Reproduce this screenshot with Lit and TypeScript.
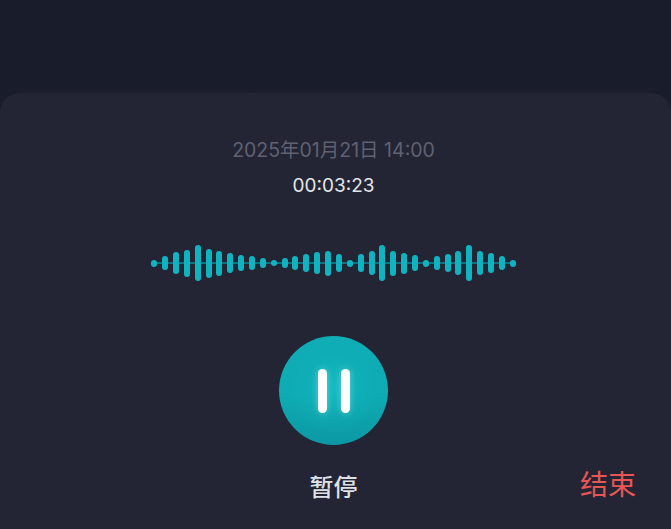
import { LitElement, html, css } from "lit";
import { customElement } from "lit/decorators.js";

const BARS = [7,14,22,27,36,29,25,20,16,14,10,6,10,14,18,22,25,18,7,18,24,36,25,21,16,7,14,18,24,36,24,20,14,7];

@customElement("app-root")
export class AppRoot extends LitElement {
  static styles = css`
    :host {
      display: block;
      width: 671px;
      height: 529px;
      overflow: hidden;
      background: linear-gradient(180deg, #191c2a 0%, #1b1d2c 100%);
      font-family: "Inter", "Noto Sans CJK SC", sans-serif;
    }
    .sheet {
      box-sizing: border-box;
      margin-top: 93px;
      height: 436px;
      background: #232534;
      border-radius: 20px 20px 0 0;
      padding: 44px 4px 0 0;
      display: flex;
      flex-direction: column;
      align-items: center;
    }
    .date {
      font-size: 19.5px;
      line-height: 27px;
      color: #5f6172;
    }
    .time {
      margin-top: 8px;
      font-size: 19px;
      line-height: 27px;
      color: #e4e5ea;
    }
    .wave {
      margin-top: 46px;
      height: 36px;
      display: flex;
      align-items: center;
      gap: 4.86px;
      background: linear-gradient(#12707e, #12707e) center / 100% 2px no-repeat;
      filter: blur(0.35px);
    }
    .bar {
      width: 6px;
      border-radius: 3px;
      background: #10b4c0;
    }
    .pause {
      margin-top: 55px;
      width: 109px;
      height: 109px;
      border-radius: 50%;
      background:
        radial-gradient(circle at 50% 48%, rgba(18, 190, 198, 0.9) 0%, rgba(18, 184, 192, 0.3) 32%, rgba(18, 184, 192, 0) 58%),
        linear-gradient(180deg, #0fadb5 0%, #0eabb3 55%, #0c98a4 100%);
      display: flex;
      align-items: center;
      justify-content: center;
      gap: 14px;
    }
    .pause i {
      width: 9px;
      height: 44px;
      border-radius: 5px;
      background: #fff;
      box-shadow: 0 0 7px rgba(255, 255, 255, 0.35);
    }
    .actions {
      box-sizing: border-box;
      width: calc(100% + 4px);
      margin-right: -4px;
      padding-right: 4px;
      margin-top: 23px;
      display: grid;
      grid-template-columns: 1fr auto 1fr;
      align-items: center;
    }
    .label {
      grid-column: 2;
      font-size: 24px;
      font-weight: 500;
      line-height: 40px;
      color: #dfe0e5;
    }
    .end {
      grid-column: 3;
      justify-self: end;
      margin-right: 31px;
      margin-top: -6px;
      font-size: 28px;
      font-weight: 400;
      line-height: 40px;
      color: #e85555;
    }
  `;

  render() {
    return html`
      <div class="sheet">
        <div class="date">2025年01月21日 14:00</div>
        <div class="time">00:03:23</div>
        <div class="wave">
          ${BARS.map((h) => html`<div class="bar" style="height:${h}px"></div>`)}
        </div>
        <div class="pause"><i></i><i></i></div>
        <div class="actions">
          <span class="label">暂停</span>
          <span class="end">结束</span>
        </div>
      </div>
    `;
  }
}
